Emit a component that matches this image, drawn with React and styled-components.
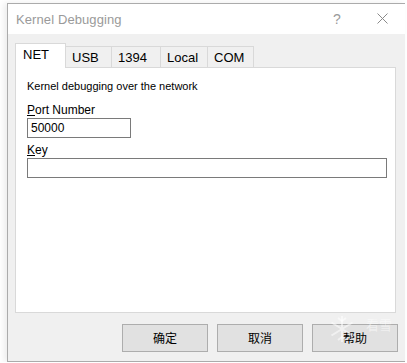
import styled, { createGlobalStyle } from 'styled-components';

const Global = createGlobalStyle`
  html, body { margin: 0; padding: 0; background: #fff; }
  body { font-family: "Liberation Sans", Arial, sans-serif; }
`;

const Window = styled.div`
  position: relative;
  margin: 3px 0 0 7px;
  width: 398px;
  height: 359px;
  box-sizing: border-box;
  border: 1px solid #ababab;
  border-right: none;
  background: #f0f0f0;
  box-shadow: -3px 0 6px rgba(0, 0, 0, 0.08);
  display: flex;
  flex-direction: column;
`;

const TitleBar = styled.div`
  height: 30px;
  background: #fff;
  display: flex;
  align-items: center;
  padding-left: 8px;
`;

const Title = styled.div`
  flex: 1;
  font-size: 13px;
  color: #9a9a9a;
  letter-spacing: 0.1px;
`;

const TitleButton = styled.div`
  width: ${(p) => p.$w}px;
  text-align: center;
  color: #9a9a9a;
  font-size: 14px;
`;

const Body = styled.div`
  flex: 1;
  padding: 9px 7px 0 7px;
  display: flex;
  flex-direction: column;
`;

const TabRow = styled.div`
  display: flex;
  align-items: flex-end;
  height: 25px;
  position: relative;
  z-index: 1;
`;

const Tab = styled.div`
  box-sizing: border-box;
  width: ${(p) => p.$w}px;
  height: ${(p) => (p.$active ? 25 : 22)}px;
  border: 1px solid #d9d9d9;
  border-bottom: ${(p) => (p.$active ? 'none' : '1px solid #d9d9d9')};
  border-left: ${(p) => (p.$first || p.$active ? '1px solid #d9d9d9' : 'none')};
  background: ${(p) => (p.$active ? '#fff' : '#f0f0f0')};
  font-size: 13px;
  color: #000;
  padding: ${(p) => (p.$active ? '3px 0 0 7px' : '3px 0 0 6px')};
`;

const Panel = styled.div`
  box-sizing: border-box;
  height: 246px;
  margin: -1px 2px 0 0;
  background: #fff;
  border: 1px solid #d9d9d9;
  padding: 12px 0 0 11px;
  font-size: 11px;
  color: #000;
`;

const Caption = styled.div`
  height: 20px;
`;

const Label = styled.div`
  margin-top: ${(p) => p.$mt}px;
  height: 15px;
  font-size: 12px;
`;

const Key = styled.span`
  text-decoration: underline;
`;

const Input = styled.div`
  box-sizing: border-box;
  width: ${(p) => p.$w}px;
  height: 20px;
  border: 1px solid #7a7a7a;
  background: #fff;
  font-size: 12px;
  padding: 2px 0 0 3px;
`;

const Footer = styled.div`
  display: flex;
  justify-content: flex-end;
  gap: 9px;
  padding: 11px 0 0;
  position: relative;
`;

const Button = styled.div`
  box-sizing: border-box;
  width: 86px;
  height: 28px;
  border: 1px solid #adadad;
  background: #e1e1e1;
  display: flex;
  align-items: center;
  justify-content: center;
  font-family: "Noto Sans CJK SC", sans-serif;
  font-size: 12px;
  line-height: 14px;
  color: #000;
`;

const Watermark = styled.div`
  position: absolute;
  right: 6px;
  top: 1px;
  display: flex;
  align-items: flex-start;
  gap: 12px;
  color: rgba(255, 255, 255, 0.5);
  font-family: "Noto Sans CJK SC", sans-serif;
  font-size: 13px;
  line-height: 13px;
  pointer-events: none;
`;

const WatermarkText = styled.span`
  margin-top: 4px;
`;

const tabs = [
  { label: 'NET', w: 51 },
  { label: 'USB', w: 46 },
  { label: '1394', w: 49 },
  { label: 'Local', w: 47 },
  { label: 'COM', w: 46 },
];

export default function App() {
  return (
    <>
      <Global />
      <Window>
        <TitleBar>
          <Title>Kernel Debugging</Title>
          <TitleButton $w={44}>?</TitleButton>
          <TitleButton $w={46}>
            <svg width="11" height="11" viewBox="0 0 11 11">
              <path d="M0.5 0.5 L10.5 10.5 M10.5 0.5 L0.5 10.5" stroke="#8a8a8a" strokeWidth="1" />
            </svg>
          </TitleButton>
        </TitleBar>
        <Body>
          <TabRow>
            {tabs.map((t, i) => (
              <Tab key={t.label} $w={t.w} $active={i === 0} $first={i === 0}>
                {t.label}
              </Tab>
            ))}
          </TabRow>
          <Panel>
            <Caption>Kernel debugging over the network</Caption>
            <Label $mt={3}>
              <Key>P</Key>ort Number
            </Label>
            <Input $w={104}>50000</Input>
            <Label $mt={5}>
              <Key>K</Key>ey
            </Label>
            <Input $w={360} />
          </Panel>
          <Footer>
            <Button>确定</Button>
            <Button>取消</Button>
            <Button>帮助</Button>
            <Watermark>
              <svg width="24" height="30" viewBox="0 0 24 30">
                <g stroke="rgba(255,255,255,0.55)" strokeWidth="2" fill="none">
                  <path d="M12 2 V28 M1.5 8.5 L22.5 21.5 M22.5 8.5 L1.5 21.5" />
                  <path d="M8 4 L12 7 L16 4 M8 26 L12 23 L16 26" />
                </g>
              </svg>
              <WatermarkText>看雪</WatermarkText>
            </Watermark>
          </Footer>
        </Body>
      </Window>
    </>
  );
}
